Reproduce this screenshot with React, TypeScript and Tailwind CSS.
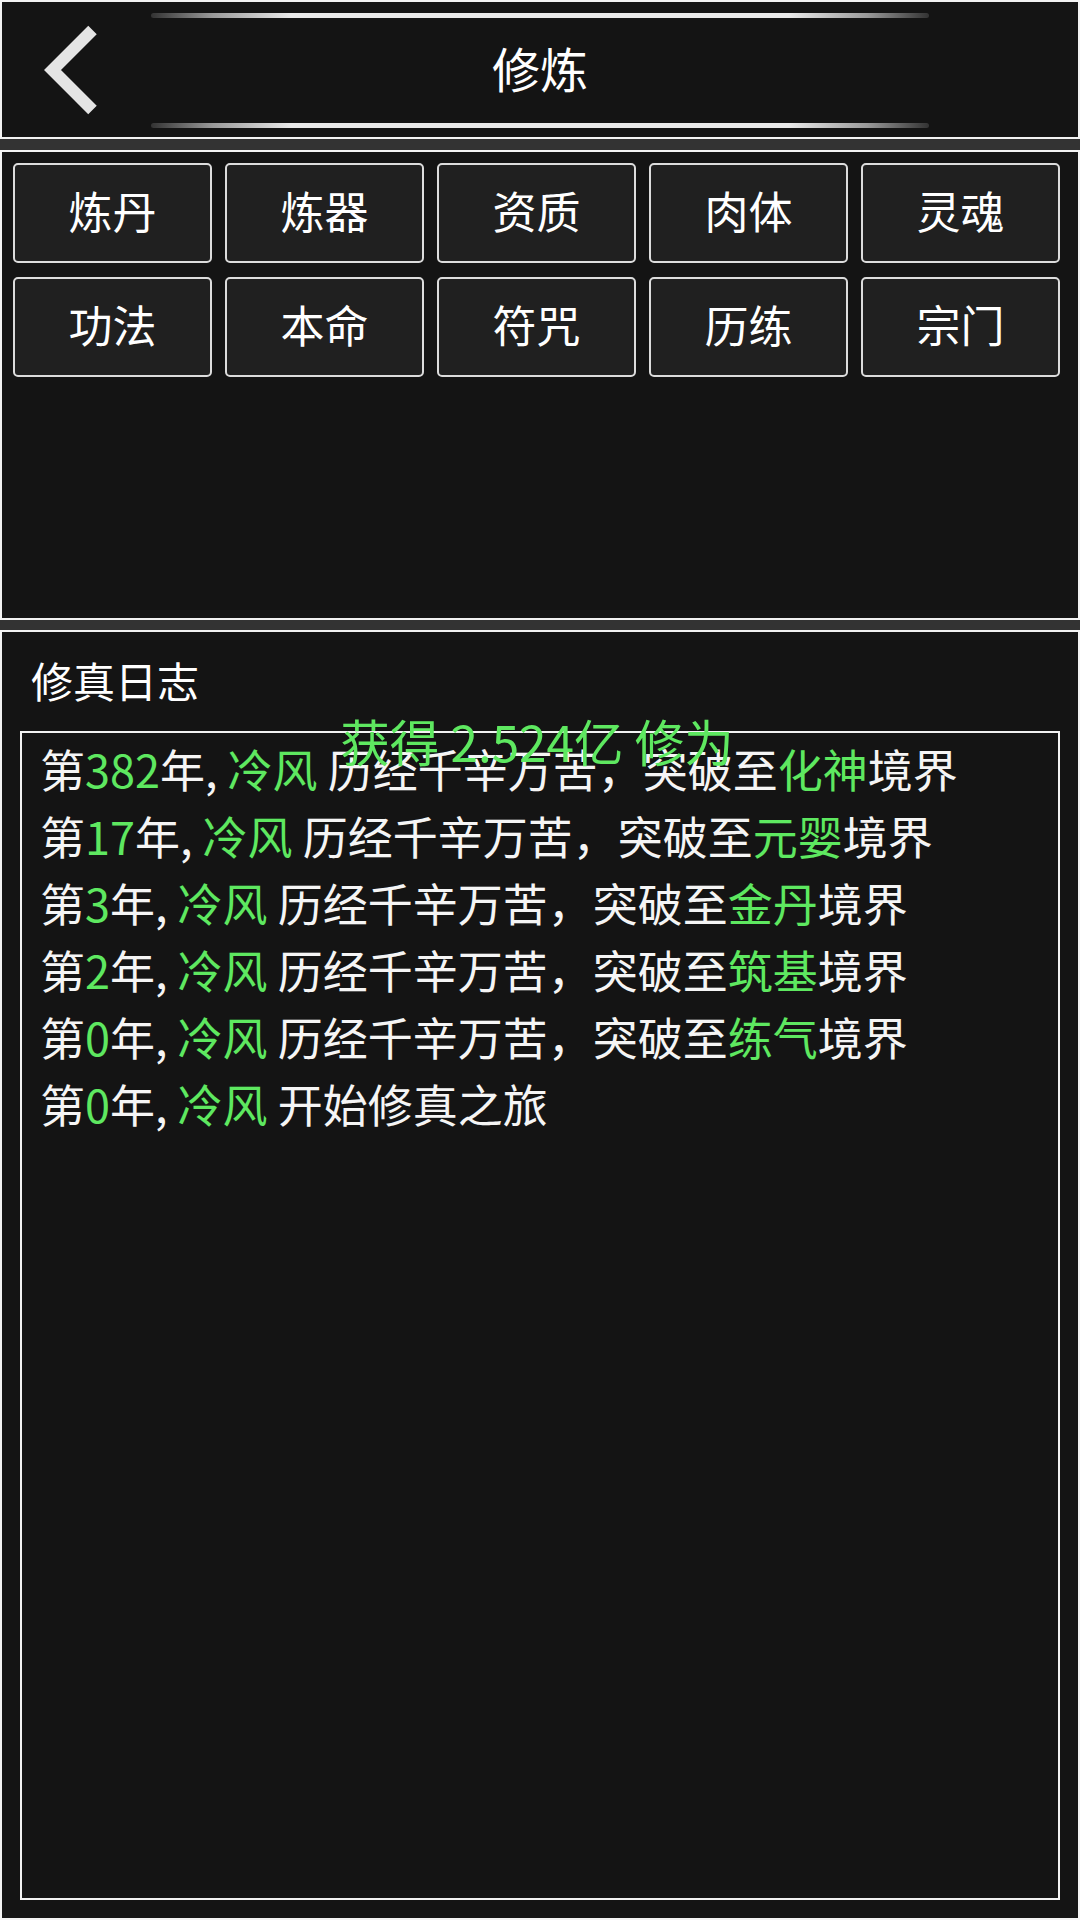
const topButtons = ["炼丹", "炼器", "资质", "肉体", "灵魂", "功法", "本命", "符咒", "历练", "宗门"];

type LogLine = { year: string; rest: string; realm?: string };

const logs: LogLine[] = [
  { year: "382", rest: "历经千辛万苦，突破至", realm: "化神" },
  { year: "17", rest: "历经千辛万苦，突破至", realm: "元婴" },
  { year: "3", rest: "历经千辛万苦，突破至", realm: "金丹" },
  { year: "2", rest: "历经千辛万苦，突破至", realm: "筑基" },
  { year: "0", rest: "历经千辛万苦，突破至", realm: "练气" },
  { year: "0", rest: "开始修真之旅" },
];

function GlowLine() {
  return (
    <div className="h-[5px] w-full rounded-full bg-[linear-gradient(90deg,#333333_0%,#9a9a9a_8%,#e9e9e9_18%,#e9e9e9_82%,#9a9a9a_92%,#333333_100%)]" />
  );
}

function Divider({ height }: { height: string }) {
  return <div className={`${height} w-full bg-[#333333]`} />;
}

export default function App() {
  return (
    <div className="relative flex h-[1920px] w-[1080px] flex-col gap-[2px] bg-[#f2f2f2] py-[2px] font-['Noto_Sans_CJK_SC','Noto_Sans',sans-serif] text-[#f5f5f5]">
      {/* Header */}
      <div className="mx-[2px] grid h-[135px] grid-cols-[149px_1fr_149px] bg-[#141414]">
        <div>
          <svg width="149" height="135" viewBox="0 0 149 135">
            <polyline
              points="90.5,28 50.5,68 90.5,108"
              fill="none"
              stroke="#e4e4e4"
              strokeWidth="12"
              strokeLinecap="butt"
              strokeLinejoin="miter"
            />
          </svg>
        </div>
        <div className="flex flex-col pt-[11px] pb-[9px]">
          <GlowLine />
          <div className="flex flex-1 items-center justify-center pb-[7px] text-[48px] leading-none text-white">
            修炼
          </div>
          <GlowLine />
        </div>
        <div />
      </div>

      <Divider height="h-[11px]" />

      {/* Menu panel */}
      <div className="mx-[2px] h-[466px] bg-[#141414] pt-[11px] pl-[11px] pr-[18px]">
        <div className="grid grid-cols-5 gap-x-[13px] gap-y-[14px]">
          {topButtons.map((label) => (
            <div
              key={label}
              className="flex h-[100px] items-center justify-center rounded-[5px] border-2 border-[#dcdcdc] bg-[#202020] pb-[6px] text-[44px] leading-none text-white"
            >
              {label}
            </div>
          ))}
        </div>
      </div>

      <Divider height="h-[10px]" />

      {/* Log panel */}
      <div className="mx-[2px] flex flex-1 flex-col bg-[#141414] px-[18px] pb-[18px]">
        <div className="pt-[23px] pl-[11px] text-[42px] leading-[50px] text-white">修真日志</div>
        <div className="mt-[26px] flex-1 border-2 border-[#f2f2f2] pt-[2px] pl-[18px]">
          {logs.map((l, i) => (
            <div key={i} className="whitespace-pre text-[45px] leading-[67px] text-[#f5f5f5]">
              第<span className="text-[#5ee860]">{l.year}</span>年,{" "}
              <span className="text-[#5ee860]">冷风</span> {l.rest}
              {l.realm && (
                <>
                  <span className="text-[#5ee860]">{l.realm}</span>境界
                </>
              )}
            </div>
          ))}
        </div>
      </div>

      {/* Floating gain toast */}
      <div className="pointer-events-none absolute top-[713px] right-0 left-0 pr-[6px] text-center text-[49.5px] leading-[56px] text-[#5ee860]">
        获得 2.524亿 修为
      </div>
    </div>
  );
}
